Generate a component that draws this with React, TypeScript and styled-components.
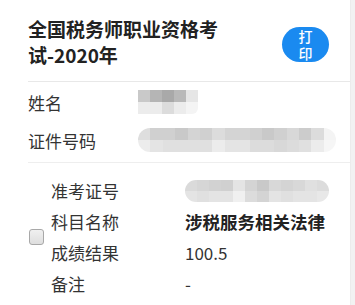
import React from 'react';
import styled, { createGlobalStyle } from 'styled-components';

const GlobalStyle = createGlobalStyle`
  html, body {
    margin: 0;
    padding: 0;
    background: #ffffff;
  }
  body {
    font-family: "Noto Sans CJK SC", "Noto Sans", sans-serif;
    color: #333333;
  }
`;

const NAME_MOSAIC = [
  ['#c9c9c9', '#b5b5b5', '#a9a9a9', '#b9b9b9', '#e6e6e6'],
  ['#ececec', '#ececec', '#dcdcdc', '#ececec', '#f4f4f4'],
];

const ID_MOSAIC = [
  ['#dedede', '#d0d0d0', '#d0d0d0', '#c9c9c9', '#d4d4d4', '#d0d0d0', '#dcdcdc', '#d4d4d4', '#d4d4d4', '#d0d0d0', '#c9c9c9', '#d0d0d0', '#d8d8d8', '#cccccc', '#dcdcdc', '#f4f4f4'],
  ['#ececec', '#e4e4e4', '#e0e0e0', '#e0e0e0', '#e0e0e0', '#e0e0e0', '#ececec', '#e4e4e4', '#e4e4e4', '#dcdcdc', '#dcdcdc', '#d8d8d8', '#dcdcdc', '#e0e0e0', '#ececec', '#f6f6f6'],
];

const EXAM_MOSAIC = [
  ['#dadada', '#d6d6d6', '#d2d2d2', '#d0d0d0', '#e4e4e4', '#d4d4d4', '#c9c9c9', '#d8d8d8', '#d4d4d4', '#d8d8d8', '#e0e0e0', '#dcdcdc'],
  ['#e4e4e4', '#e0e0e0', '#e4e4e4', '#e4e4e4', '#f0f0f0', '#dcdcdc', '#d4d4d4', '#e4e4e4', '#e0e0e0', '#e4e4e4', '#e4e4e4', '#e8e8e8'],
];

function Mosaic({ cells, cellWidth, cellHeight, rounded }: {
  cells: string[][];
  cellWidth: number;
  cellHeight: number;
  rounded?: boolean;
}) {
  return (
    <MosaicBox $rounded={rounded}>
      {cells.map((row, r) => (
        <MosaicRow key={r}>
          {row.map((color, c) => (
            <MosaicCell key={c} $w={cellWidth} $h={cellHeight} style={{ background: color }} />
          ))}
        </MosaicRow>
      ))}
    </MosaicBox>
  );
}

export default function App() {
  return (
    <>
      <GlobalStyle />
      <Page>
        <Content>
          <Header>
            <Title>全国税务师职业资格考试-2020年</Title>
            <PrintButton>打印</PrintButton>
          </Header>

          <PersonSection>
            <PersonRow>
              <PersonLabel>姓名</PersonLabel>
              <Mosaic cells={NAME_MOSAIC} cellWidth={12} cellHeight={12} />
            </PersonRow>
            <PersonRow>
              <PersonLabel>证件号码</PersonLabel>
              <Mosaic cells={ID_MOSAIC} cellWidth={12.4} cellHeight={12} rounded />
            </PersonRow>
          </PersonSection>

          <ScoreSection>
            <Checkbox type="checkbox" />
            <ScoreTable>
              <ScoreRow>
                <ScoreLabel>准考证号</ScoreLabel>
                <Mosaic cells={EXAM_MOSAIC} cellWidth={12} cellHeight={11} rounded />
              </ScoreRow>
              <ScoreRow>
                <ScoreLabel>科目名称</ScoreLabel>
                <ScoreValue $bold>涉税服务相关法律</ScoreValue>
              </ScoreRow>
              <ScoreRow>
                <ScoreLabel>成绩结果</ScoreLabel>
                <ScoreValue>100.5</ScoreValue>
              </ScoreRow>
              <ScoreRow>
                <ScoreLabel>备注</ScoreLabel>
                <ScoreValue>-</ScoreValue>
              </ScoreRow>
            </ScoreTable>
          </ScoreSection>
        </Content>
        <SideStrip />
      </Page>
    </>
  );
}

const Page = styled.div`
  display: flex;
  width: 355px;
  min-height: 305px;
`;

const Content = styled.div`
  flex: 1;
  padding-left: 28px;
  background: #ffffff;
`;

const SideStrip = styled.div`
  width: 4px;
  background: #f2f2f2;
  border-left: 1px solid #ececec;
`;

const Header = styled.div`
  display: flex;
  align-items: center;
  justify-content: space-between;
  padding: 16px 21px 13px 0;
  border-bottom: 1px solid #e8e8e8;
`;

const Title = styled.h1`
  width: 196px;
  margin: 0;
  font-size: 19px;
  line-height: 26px;
  font-weight: 700;
  color: #222222;
`;

const PrintButton = styled.button`
  width: 47px;
  height: 35px;
  margin-top: 5px;
  padding: 0 16px;
  border: none;
  border-radius: 18px;
  background: #1a8af0;
  color: #ffffff;
  font-family: "Noto Sans CJK SC", sans-serif;
  font-size: 14px;
  line-height: 17px;
  font-weight: 500;
`;

const PersonSection = styled.div`
  padding: 1px 0 3px;
  border-bottom: 1px solid #eeeeee;
`;

const PersonRow = styled.div`
  display: flex;
  align-items: center;
  height: 38px;
`;

const PersonLabel = styled.div`
  width: 110px;
  font-size: 17px;
  color: #333333;
`;

const MosaicBox = styled.div<{ $rounded?: boolean }>`
  display: flex;
  flex-direction: column;
  overflow: hidden;
  border-radius: ${(p) => (p.$rounded ? '12px' : '0 0 6px 0')};
  filter: blur(0.4px);
`;

const MosaicRow = styled.div`
  display: flex;
`;

const MosaicCell = styled.div<{ $w: number; $h: number }>`
  width: ${(p) => p.$w}px;
  height: ${(p) => p.$h}px;
`;

const ScoreSection = styled.div`
  display: flex;
  align-items: center;
  padding: 12px 0 8px;
`;

const Checkbox = styled.input`
  appearance: none;
  width: 15px;
  height: 16px;
  margin: 0 7px 0 1px;
  border: 1px solid #a8a8a8;
  border-radius: 3px;
  background: linear-gradient(#f0f0f0, #dedede);
`;

const ScoreTable = styled.div`
  display: flex;
  flex-direction: column;
`;

const ScoreRow = styled.div`
  display: flex;
  align-items: center;
  height: 31px;
`;

const ScoreLabel = styled.div`
  width: 134px;
  font-size: 17px;
  color: #333333;
`;

const ScoreValue = styled.div<{ $bold?: boolean }>`
  font-size: ${(p) => (p.$bold ? '17.5px' : '17px')};
  font-weight: ${(p) => (p.$bold ? 700 : 400)};
  color: ${(p) => (p.$bold ? '#222222' : '#333333')};
`;
